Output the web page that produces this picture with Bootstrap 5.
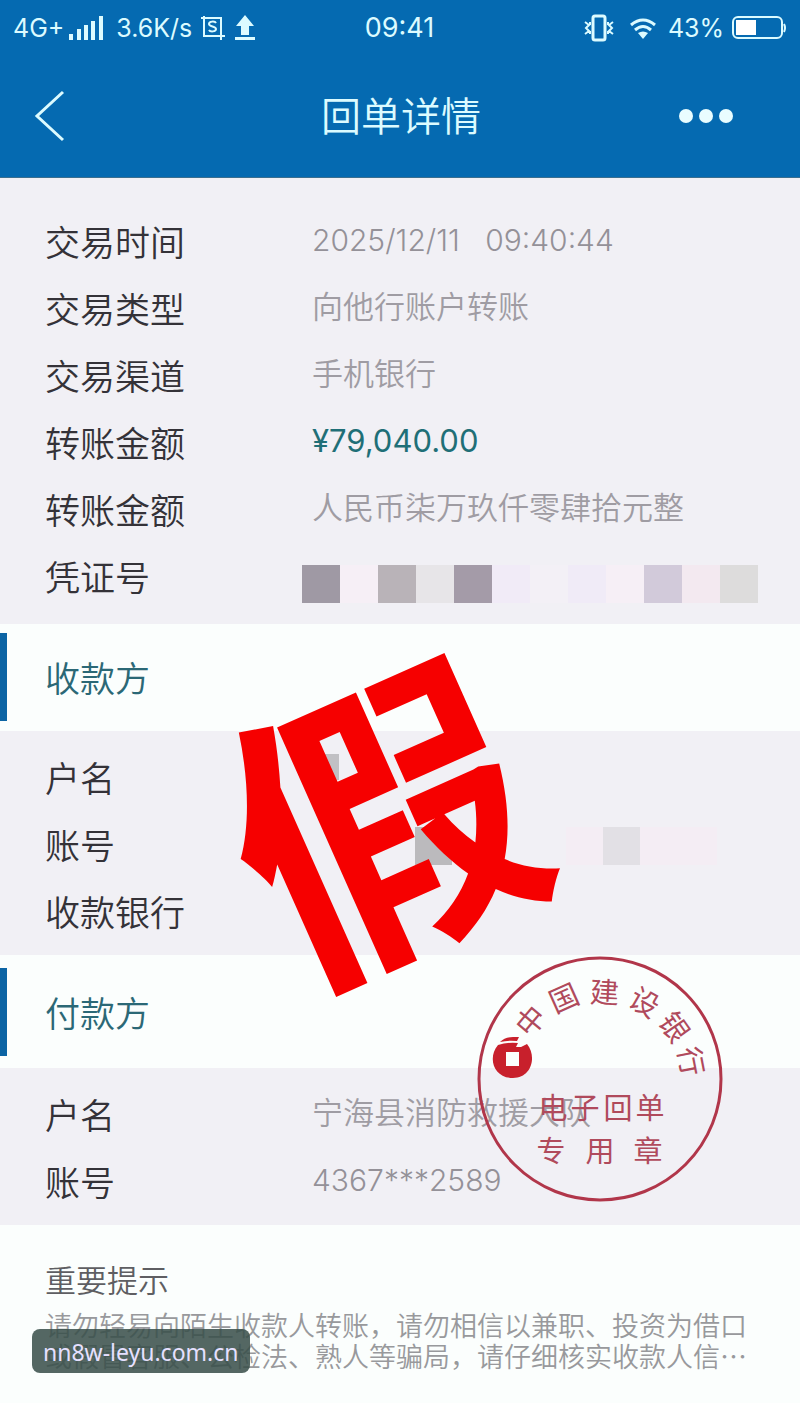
<!DOCTYPE html>
<html lang="zh-CN">
<head>
<meta charset="utf-8">
<meta name="viewport" content="width=device-width, initial-scale=1">
<title>回单详情</title>
<link href="https://cdn.jsdelivr.net/npm/bootstrap@5.3.0/dist/css/bootstrap.min.css" rel="stylesheet">
<style>
  body { font-family: Inter, "Noto Sans CJK SC", sans-serif; background: #fbfefd; color: #343238; }
  .app-head { background: #056ab1; color: #dcfbff; border-bottom: 1px solid #3b6f8f; }
  .status { height: 56px; padding: 0 14px 0 13px; font-size: 25px; line-height: 28px; }
  .status > div { flex: 1 1 0; }
  .clock { font-size: 27px; }
  .titlebar { height: 121px; padding: 4px 66px 0 30px; }
  .titlebar h1 { font-size: 40px; line-height: 48px; font-weight: 350; margin: 0 0 4px 38px; }
  .side { flex: 1 1 0; }
  .icon-btn { color: inherit; background: none; border: 0; padding: 0; line-height: 0; }
  .icon-btn svg, .status svg { display: block; }
  .panel { background: #f1f0f5; padding: 14px 0 9px 45px; }
  .panel-first { padding-top: 31px; padding-bottom: 13px; }
  .entry { display: grid; grid-template-columns: 267px 1fr; align-items: center; height: 67px; }
  .entry dt { font-size: 35px; line-height: 44px; font-weight: 350; }
  .entry dd { font-size: 31px; line-height: 40px; font-weight: 350; color: #9f9ca3; margin: 0 0 6px; }
  .entry .num { font-size: 30px; font-weight: 300; color: #949198; }
  .entry .money { font-size: 31px; color: #1f6f77; font-weight: 400; }
  .entry .masked { margin: 12px 0 0 -10px; }
  .entry .masked-plain { margin: 0; }
  .cell { flex: 0 0 38px; height: 38px; }
  .party { padding: 9px 0 10px; }
  .party-pay { padding: 13px 0 12px; }
  .party h2 { height: 88px; margin: 0; padding: 2px 38px 0; border-left: 7px solid #0c64a4; font-size: 35px; line-height: 88px; font-weight: 350; color: #2b6876; }
  .fake { position: absolute; left: 48%; top: 203px; font-size: 300px; line-height: 300px; font-weight: 700; color: #f60000; transform: translate(-50%, -50%) rotate(-24deg); z-index: 2; }
  .seal { position: absolute; right: 75px; top: -1px; z-index: 1; }
  .seal text { font-size: 29px; text-anchor: middle; fill: #b04a5c; }
  .notice { padding: 36px 45px 32px; color: #98999c; font-weight: 350; font-size: 27px; line-height: 31px; }
  .notice h3 { font-size: 31px; line-height: 40px; font-weight: 350; color: #5e5e62; margin: 0 0 10px; }
  .notice p { white-space: nowrap; }
  .site-tag { position: absolute; left: 32px; bottom: 32px; height: 44px; padding: 0 11px; border-radius: 8px; background: rgba(56, 78, 73, .86); color: #e6e0ff; font: 400 23px/46px "Noto Sans", sans-serif; }
</style>
</head>
<body>
<main class="position-relative min-vh-100">
  <header class="app-head">
    <div class="status d-flex align-items-center">
      <div class="d-flex align-items-center">
        <span>4G+</span>
        <svg class="ms-1" width="36" height="26" viewBox="0 0 36 26" fill="currentColor" aria-hidden="true"><path d="M1 19h4v6H1zM9 14h4v11H9zM16 10h4v15h-4zM23 6h4v19h-4zM31 1h4v24h-4z"/></svg>
        <span class="ms-2 ps-1">3.6K/s</span>
        <svg class="ms-2" width="26" height="26" viewBox="0 0 26 26" fill="none" stroke="currentColor" stroke-width="2" aria-hidden="true"><path d="M1 3h20v22M4 1v20h21"/><path d="M16 8c-1-2-7-2-7 1s7 2 7 5-6 3-7 1"/></svg>
        <svg class="ms-2" width="22" height="26" viewBox="0 0 22 26" fill="currentColor" aria-hidden="true"><path d="M11 0l9 11h-5v9H7v-9H2zM1 22h20v3H1z"/></svg>
      </div>
      <span class="clock">09:41</span>
      <div class="d-flex align-items-center justify-content-end">
        <svg width="30" height="28" viewBox="0 0 30 28" fill="none" stroke="currentColor" stroke-width="2" aria-hidden="true"><rect x="9" y="2" width="12" height="24" rx="2" stroke-width="3"/><path d="M1 8l4 3-3 3 3 3-4 3M6 8v3M6 17v3M29 8l-4 3 3 3-3 3 4 3M24 8v3M24 17v3"/></svg>
        <svg class="ms-3 me-2" width="26" height="22" viewBox="0 0 26 22" fill="none" stroke="currentColor" stroke-width="3" aria-hidden="true"><path d="M1 8q12-10 24 0M5 13q8-7 16 0"/><path d="M8 16q5-3 10 0l-5 6z" fill="currentColor" stroke="none"/></svg>
        <span class="ms-1">43%</span>
        <svg class="ms-2" width="54" height="24" viewBox="0 0 54 24" fill="none" stroke="currentColor" stroke-width="2" aria-hidden="true"><rect x="1" y="1" width="49" height="21" rx="5"/><path d="M4 4h20v15H4z" fill="#fff" stroke="none"/><path d="M52 8q2 4 0 8"/></svg>
      </div>
    </div>
    <div class="titlebar d-flex align-items-center">
      <div class="side">
        <button type="button" class="icon-btn" aria-label="返回"><svg width="40" height="54" viewBox="0 0 40 54" fill="none" stroke="currentColor" stroke-width="3"><path d="M33 3L7 27l26 24"/></svg></button>
      </div>
      <h1>回单详情</h1>
      <div class="side text-end">
        <button type="button" class="icon-btn" aria-label="更多"><svg width="60" height="20" viewBox="0 0 60 20" fill="#e9fdff"><circle cx="12" cy="10" r="7"/><circle cx="32" cy="10" r="7"/><circle cx="52" cy="10" r="7"/></svg></button>
      </div>
    </div>
  </header>

  <dl class="panel panel-first m-0">
    <div class="entry"><dt>交易时间</dt><dd class="num">2025/12/11&nbsp;&nbsp; 09:40:44</dd></div>
    <div class="entry"><dt>交易类型</dt><dd>向他行账户转账</dd></div>
    <div class="entry"><dt>交易渠道</dt><dd>手机银行</dd></div>
    <div class="entry"><dt>转账金额</dt><dd class="num money">¥79,040.00</dd></div>
    <div class="entry"><dt>转账金额</dt><dd>人民币柒万玖仟零肆拾元整</dd></div>
    <div class="entry"><dt>凭证号</dt>
      <dd class="masked d-flex">
        <span class="cell" style="background:#9f99a4"></span><span class="cell" style="background:#f6eff6"></span><span class="cell" style="background:#b9b3b8"></span><span class="cell" style="background:#e7e5e8"></span><span class="cell" style="background:#a49ba8"></span><span class="cell" style="background:#f1ebf7"></span><span class="cell" style="background:#f3f0f6"></span><span class="cell" style="background:#f0ebf7"></span><span class="cell" style="background:#f6eff6"></span><span class="cell" style="background:#d2cada"></span><span class="cell" style="background:#f3e9f0"></span><span class="cell" style="background:#dddcdc"></span>
      </dd></div>
  </dl>

  <section class="position-relative">
    <div class="party"><h2>收款方</h2></div>
    <dl class="panel m-0">
      <div class="entry"><dt>户名</dt><dd class="masked-plain d-flex"><svg width="28" height="50" aria-hidden="true"><path d="M11 0h16v26H11z" fill="#c1c0c4"/></svg></dd></div>
      <div class="entry"><dt>账号</dt>
        <dd class="masked-plain d-flex"><svg width="406" height="38" aria-hidden="true"><path d="M103 0h37v38h-37z" fill="#bbbabd"/><path d="M254 0h151v38H254z" fill="#f4edf4"/><path d="M291 0h37v38h-37z" fill="#e2e0e5"/></svg></dd></div>
      <div class="entry"><dt>收款银行</dt><dd></dd></div>
    </dl>
    <div class="fake">假</div>
  </section>

  <section class="position-relative">
    <div class="party party-pay"><h2>付款方</h2></div>
    <dl class="panel m-0">
      <div class="entry"><dt>户名</dt><dd>宁海县消防救援大队</dd></div>
      <div class="entry"><dt>账号</dt><dd class="num">4367***2589</dd></div>
    </dl>
    <svg class="seal" width="250" height="250" viewBox="-125 -125 250 250" role="img" aria-label="印章">
      <circle r="121" fill="none" stroke="#b1364a" stroke-width="3"/>
      <g>
        <text y="-80" transform="rotate(-50)">中</text>
        <text y="-78" transform="rotate(-24)">国</text>
        <text y="-76" transform="rotate(3)">建</text>
        <text y="-78" transform="rotate(30)">设</text>
        <text y="-80" transform="rotate(55)">银</text>
        <text y="-82" transform="rotate(79)">行</text>
      </g>
      <g><text x="-47" y="40">电</text><text x="-15" y="40">子</text><text x="18" y="40">回</text><text x="50" y="40">单</text></g>
      <g><text x="-49" y="83">专</text><text x="0" y="83">用</text><text x="48" y="83">章</text></g>
      <g fill="#c8202c">
        <path d="M-100-37q5-5 13-5h6l-2 4q-9-1-17 1z"/>
        <path fill-rule="evenodd" d="M-102-34q9-3 20-2l-2 4h5l6-3c10 12 5 34-14 34s-26-20-15-33zm8 7v14h13v-14z"/>
      </g>
    </svg>
  </section>

  <footer class="notice">
    <h3>重要提示</h3>
    <p class="m-0">请勿轻易向陌生收款人转账，请勿相信以兼职、投资为借口<br>或假冒客服、公检法、熟人等骗局，请仔细核实收款人信⋯</p>
  </footer>
  <div class="site-tag">nn8w-leyu.com.cn</div>
</main>
<script src="https://cdn.jsdelivr.net/npm/bootstrap@5.3.0/dist/js/bootstrap.bundle.min.js"></script>
</body>
</html>
